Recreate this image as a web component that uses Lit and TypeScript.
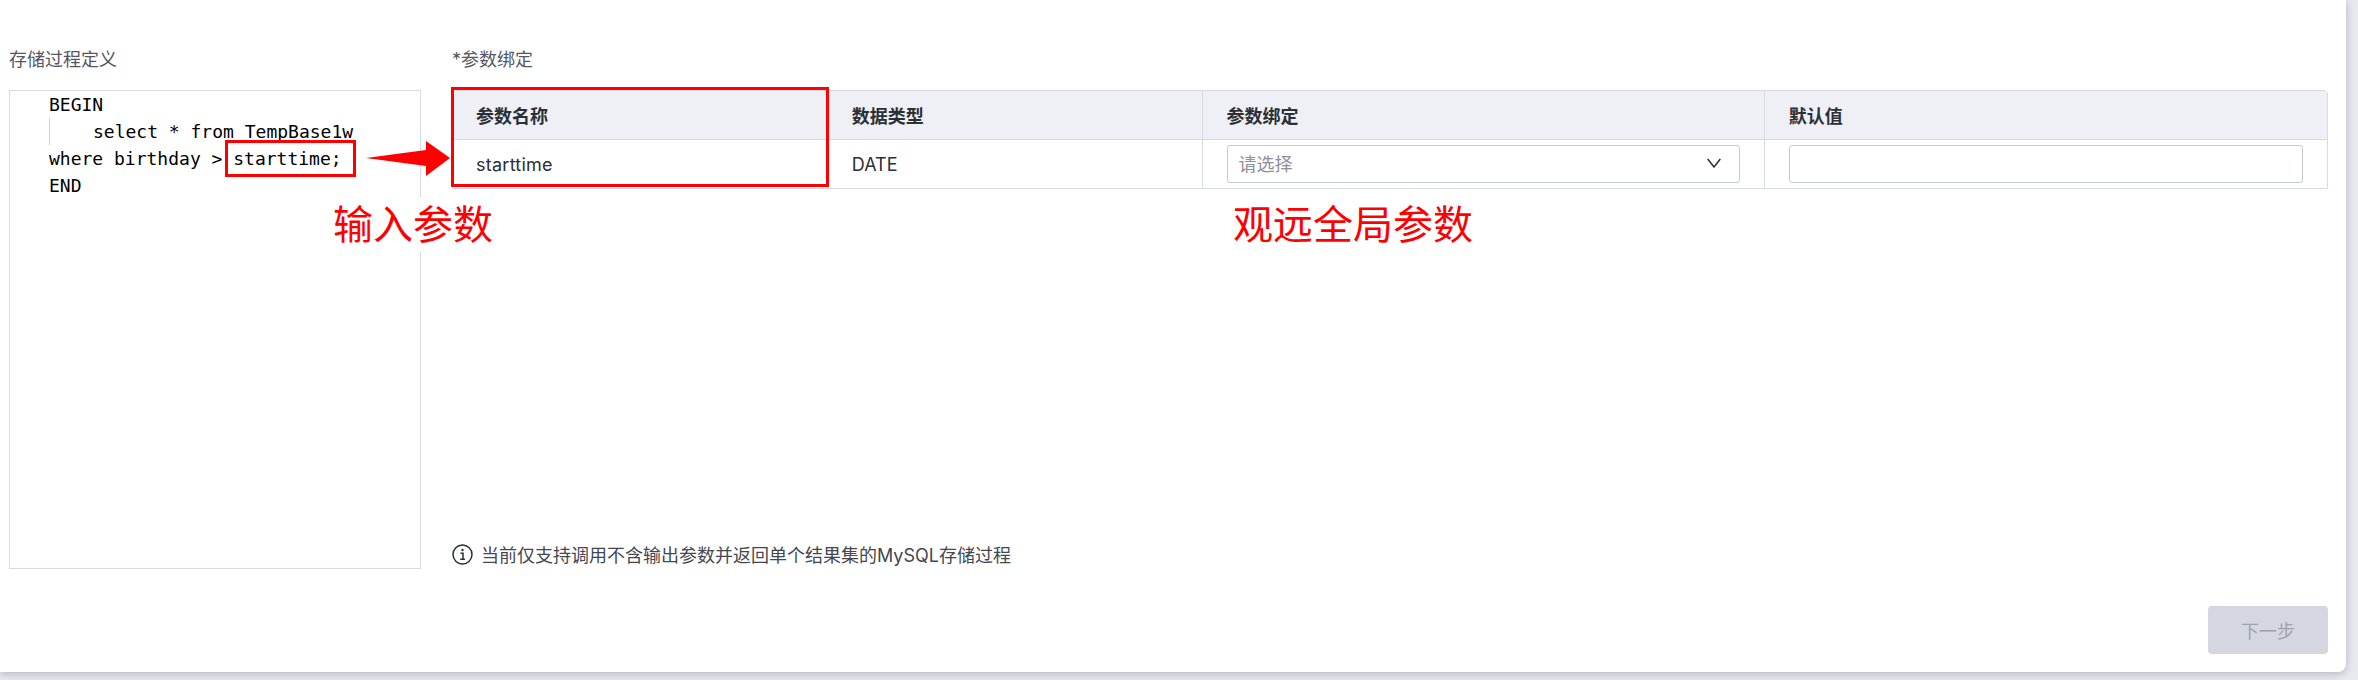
import { LitElement, html, css } from "lit";
import { customElement } from "lit/decorators.js";

@customElement("app-root")
export class AppRoot extends LitElement {
  static styles = css`
    :host {
      display: block;
      width: 2358px;
      height: 680px;
      background: #e9eaf0;
      overflow: hidden;
      font-family: Inter, "Noto Sans CJK SC", sans-serif;
    }
    * { box-sizing: border-box; }
    .card {
      position: relative;
      display: flex;
      flex-direction: column;
      width: 2346px;
      height: 672px;
      padding: 46px 18px 18px 9px;
      background: #fff;
      border-radius: 0 0 8px 0;
      box-shadow: 0 2px 8px rgba(40, 44, 60, 0.28);
    }
    .main { display: flex; gap: 31px; height: 523px; }
    .left { width: 412px; display: flex; flex-direction: column; }
    .right { flex: 1; display: flex; flex-direction: column; }
    .label {
      height: 26px;
      margin-bottom: 18px;
      padding-top: 1px;
      font-size: 18px;
      line-height: 26px;
      color: #55585f;
    }
    .editor {
      height: 479px;
      border: 1px solid #d8dae2;
      font-family: "DejaVu Sans Mono", monospace;
      font-size: 18px;
      line-height: 27px;
      color: #000;
    }
    .line { height: 27px; padding-left: 39px; white-space: pre; }
    .guide {
      height: 27px;
      margin-left: 39px;
      padding-left: 43px;
      border-left: 1px solid #d0d2d8;
      white-space: pre;
    }
    .table {
      display: grid;
      grid-template-columns: 2fr 2fr 3fr 3fr;
      grid-template-rows: 49px 48px;
      height: 99px;
      border: 1px solid #d8dae3;
      border-radius: 4px 4px 0 0;
      font-size: 18px;
      color: #2b2f36;
    }
    .cell {
      display: flex;
      align-items: center;
      padding: 0 24px;
      min-width: 0;
      border-right: 1px solid #d8dae3;
    }
    .cell:nth-child(4n + 1) { padding-left: 23px; }
    .cell:nth-child(4n) { border-right: none; }
    .head {
      background: #eff0f5;
      border-bottom: 1px solid #d8dae3;
      font-weight: 600;
    }
    .name { letter-spacing: 0.25px; }
    .field {
      display: flex;
      align-items: center;
      justify-content: space-between;
      width: 100%;
      height: 38px;
      padding: 0 18px 2px 11px;
      border: 1px solid #c6c8d0;
      border-radius: 3px;
      background: #fff;
    }
    .placeholder { color: #8d9096; }
    .note {
      display: flex;
      align-items: center;
      gap: 8px;
      height: 28px;
      margin-top: auto;
      padding-bottom: 2px;
      font-size: 18px;
      color: #44474e;
    }
    .footer { display: flex; justify-content: flex-end; margin-top: 37px; }
    .btn {
      width: 120px;
      height: 48px;
      border: none;
      border-radius: 4px;
      background: #d5d7e0;
      color: #9fa1a9;
      font-size: 18px;
      font-family: inherit;
    }
    .mark {
      position: absolute;
      border: 3px solid #ff0000;
      pointer-events: none;
    }
    .mark.code { left: 225px; top: 140px; width: 131px; height: 37px; }
    .mark.param { left: 451px; top: 87px; width: 378px; height: 100px; }
    .arrow { position: absolute; left: 366px; top: 141px; }
    .annot {
      position: absolute;
      top: 197px;
      height: 55px;
      padding: 0 13px;
      background: #fff;
      color: #ff0000;
      font-size: 40px;
      line-height: 55px;
      white-space: nowrap;
    }
    .annot.input { left: 320px; }
    .annot.global { left: 1220px; }
  `;

  render() {
    return html`
      <div class="card">
        <div class="main">
          <div class="left">
            <div class="label">存储过程定义</div>
            <div class="editor">
              <div class="line">BEGIN</div>
              <div class="guide">select * from TempBase1w</div>
              <div class="line">where birthday > starttime;</div>
              <div class="line">END</div>
            </div>
          </div>
          <div class="right">
            <div class="label">*参数绑定</div>
            <div class="table">
              <div class="cell head">参数名称</div>
              <div class="cell head">数据类型</div>
              <div class="cell head">参数绑定</div>
              <div class="cell head">默认值</div>
              <div class="cell name">starttime</div>
              <div class="cell">DATE</div>
              <div class="cell">
                <div class="field">
                  <span class="placeholder">请选择</span>
                  <svg width="14" height="10" viewBox="0 0 14 10" fill="none">
                    <path d="M0.7 1 L7 9 L13.3 1" stroke="#2b2f36" stroke-width="1.5" />
                  </svg>
                </div>
              </div>
              <div class="cell"><div class="field"></div></div>
            </div>
            <div class="note">
              <svg width="21" height="21" viewBox="0 0 21 21" fill="none">
                <circle cx="10.5" cy="10.5" r="9.5" stroke="#2b2f36" stroke-width="1.5" />
                <circle cx="10.5" cy="6" r="1.2" fill="#2b2f36" />
                <path d="M8.5 9.2 H11 V15.2 M8.2 15.2 H13" stroke="#2b2f36" stroke-width="1.5" />
              </svg>
              <span>当前仅支持调用不含输出参数并返回单个结果集的MySQL存储过程</span>
            </div>
          </div>
        </div>
        <div class="footer"><button class="btn" disabled>下一步</button></div>

        <div class="mark code"></div>
        <div class="mark param"></div>
        <svg class="arrow" width="85" height="35" viewBox="0 0 85 35">
          <polygon points="0,17 60,9 60,0 84,17 60,35 60,25" fill="#ff0000" />
        </svg>
        <div class="annot input">输入参数</div>
        <div class="annot global">观远全局参数</div>
      </div>
    `;
  }
}
